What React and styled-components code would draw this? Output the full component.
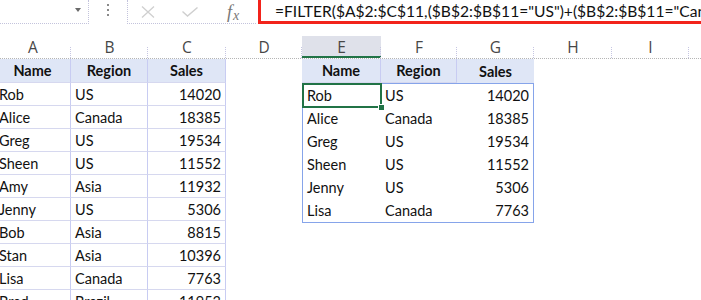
import React from "react";
import styled, { createGlobalStyle } from "styled-components";

const GlobalStyle = createGlobalStyle`
  html, body { margin: 0; padding: 0; background: #fff; }
  body {
    width: 701px;
    height: 300px;
    overflow: hidden;
    font-family: Lato, "Open Sans", sans-serif;
    color: #111;
  }
`;

const COLS = [76, 77, 78, 76, 79, 76, 77, 78, 77, 60];
const LETTERS = ["A", "B", "C", "D", "E", "F", "G", "H", "I", ""];

const SOURCE = [
  ["Rob", "US", 14020],
  ["Alice", "Canada", 18385],
  ["Greg", "US", 19534],
  ["Sheen", "US", 11552],
  ["Amy", "Asia", 11932],
  ["Jenny", "US", 5306],
  ["Bob", "Asia", 8815],
  ["Stan", "Asia", 10396],
  ["Lisa", "Canada", 7763],
  ["Brad", "Brazil", 11953],
];
const FILTERED = SOURCE.filter((r) => r[1] === "US" || r[1] === "Canada");

const Page = styled.div`
  width: 701px;
  height: 300px;
  overflow: hidden;
`;

const FormulaBar = styled.div`
  display: flex;
  height: 24px;
`;

const NameBox = styled.div`
  width: 89px;
  box-sizing: border-box;
  border-right: 1px dotted #c3c3dc;
  border-bottom: 1px dotted #c3c3dc;
  display: flex;
  justify-content: flex-end;
  align-items: flex-start;
  padding: 8px 7px 0 0;
`;

const Caret = styled.span`
  width: 0;
  height: 0;
  border-left: 3.5px solid transparent;
  border-right: 3.5px solid transparent;
  border-top: 4px solid #6a6a6a;
`;

const Grip = styled.div`
  width: 38px;
  display: flex;
  flex-direction: column;
  align-items: center;
  padding-top: 4px;
  gap: 3px;
`;

const GripDot = styled.span`
  width: 2px;
  height: 2px;
  background: #8a8a8a;
`;

const Buttons = styled.div`
  width: 129px;
  margin-right: 2px;
  box-sizing: border-box;
  border-left: 1px dotted #c3c3dc;
  border-bottom: 1px dotted #c3c3dc;
  display: flex;
  align-items: center;
`;

const BtnSlot = styled.div`
  width: ${(p) => p.$w}px;
  height: 100%;
  display: flex;
  align-items: center;
  justify-content: center;
`;

const Fx = styled.span`
  font-family: "Liberation Serif", serif;
  font-style: italic;
  font-size: 18px;
  color: #777;
  line-height: 1;
  & > span {
    font-size: 14px;
    position: relative;
    top: 2px;
    margin-left: 1px;
  }
`;

const FormulaInput = styled.div`
  flex: 1;
  box-sizing: border-box;
  border-left: 3px solid #f2231b;
  border-bottom: 3px solid #f2231b;
  padding-left: 14px;
  display: flex;
  align-items: center;
  white-space: nowrap;
  overflow: hidden;
  font-size: 15.6px;
  color: #111;
`;

const ColHeaderRow = styled.div`
  display: flex;
  margin-top: 12px;
  margin-left: -5px;
  height: 22px;
  border-bottom: 1px dotted #b5b5b5;
`;

const ColHead = styled.div`
  width: ${(p) => p.$w}px;
  flex: none;
  position: relative;
  display: flex;
  align-items: center;
  justify-content: center;
  font-family: "Open Sans", sans-serif;
  font-size: 15.5px;
  color: #474747;
  background: ${(p) => (p.$selected ? "#dfe1ea" : "transparent")};
  box-shadow: ${(p) => (p.$selected ? "inset 0 -2px 0 #217346" : "none")};
  &::after {
    content: "";
    position: absolute;
    right: 0;
    bottom: 0;
    height: 11px;
    border-right: 1px dotted #c6c6e2;
  }
`;

const Body = styled.div`
  display: flex;
  align-items: flex-start;
  margin-left: -5px;
`;

const Table = styled.div`
  display: grid;
  grid-template-columns: ${(p) => p.$cols};
  grid-template-rows: 24px;
  grid-auto-rows: 23px;
`;

const Cell = styled.div`
  box-sizing: border-box;
  display: flex;
  align-items: center;
  justify-content: ${(p) =>
    p.$head ? "center" : p.$num ? "flex-end" : "flex-start"};
  padding: 0 4px;
  font-size: 14.5px;
  font-weight: ${(p) => (p.$head ? 700 : 400)};
  color: #111;
  white-space: nowrap;
  background: ${(p) => (p.$head ? "#dfe6f6" : "transparent")};
  border-right: ${(p) => (p.$grid ? "1px solid #c8ccf2" : "none")};
  border-bottom: ${(p) => (p.$grid ? "1px solid #d6d8ef" : "none")};
`;

const Spacer = styled.div`
  width: ${(p) => p.$w}px;
  flex: none;
`;

const RightBlock = styled.div`
  display: flex;
  flex-direction: column;
  width: 232px;
`;

const SpillHead = styled.div`
  display: grid;
  grid-template-columns: 79px 76px 77px;
  height: 24px;
`;

const SpillBody = styled.div`
  display: grid;
  grid-template-columns: 78px 76px 76px;
  grid-auto-rows: 23px;
  border: 1px solid #86a4ea;
`;

const SelectedCell = styled(Cell)`
  position: relative;
  box-shadow: 0 0 0 1px #217346, inset 0 0 0 1px #217346;
  z-index: 1;
  &::after {
    content: "";
    position: absolute;
    right: -4px;
    bottom: -4px;
    width: 5px;
    height: 5px;
    background: #217346;
    border: 1px solid #fff;
  }
`;

export default function App() {
  return (
    <Page>
      <GlobalStyle />
      <FormulaBar>
        <NameBox>
          <Caret />
        </NameBox>
        <Grip>
          <GripDot />
          <GripDot />
          <GripDot />
        </Grip>
        <Buttons>
          <BtnSlot $w={40}>
            <svg width="14" height="12" viewBox="0 0 14 12">
              <path d="M1 0.5 L13 11.5 M13 0.5 L1 11.5" stroke="#cfcfcf" strokeWidth="1.3" fill="none" />
            </svg>
          </BtnSlot>
          <BtnSlot $w={43}>
            <svg width="16" height="10" viewBox="0 0 16 10">
              <path d="M0.5 4.5 L5.5 9 L15.5 0.5" stroke="#cfcfcf" strokeWidth="1.4" fill="none" />
            </svg>
          </BtnSlot>
          <BtnSlot $w={44}>
            <Fx>
              f<span>x</span>
            </Fx>
          </BtnSlot>
        </Buttons>
        <FormulaInput>
          =FILTER($A$2:$C$11,($B$2:$B$11="US")+($B$2:$B$11="Canada"))
        </FormulaInput>
      </FormulaBar>

      <ColHeaderRow>
        {COLS.map((w, i) => (
          <ColHead key={i} $w={w} $selected={LETTERS[i] === "E"}>
            {LETTERS[i]}
          </ColHead>
        ))}
      </ColHeaderRow>

      <Body>
        <Table $cols="76px 77px 78px">
          <Cell $head $grid>Name</Cell>
          <Cell $head $grid>Region</Cell>
          <Cell $head $grid>Sales</Cell>
          {SOURCE.map((r) => (
            <React.Fragment key={r[0]}>
              <Cell $grid>{r[0]}</Cell>
              <Cell $grid>{r[1]}</Cell>
              <Cell $grid $num>{r[2]}</Cell>
            </React.Fragment>
          ))}
        </Table>
        <Spacer $w={76} />
        <RightBlock>
          <SpillHead>
            <Cell $head $grid>Name</Cell>
            <Cell $head $grid>Region</Cell>
            <Cell $head>Sales</Cell>
          </SpillHead>
          <SpillBody>
            {FILTERED.map((r, i) => (
              <React.Fragment key={r[0]}>
                {i === 0 ? <SelectedCell>{r[0]}</SelectedCell> : <Cell>{r[0]}</Cell>}
                <Cell>{r[1]}</Cell>
                <Cell $num>{r[2]}</Cell>
              </React.Fragment>
            ))}
          </SpillBody>
        </RightBlock>
      </Body>
    </Page>
  );
}
